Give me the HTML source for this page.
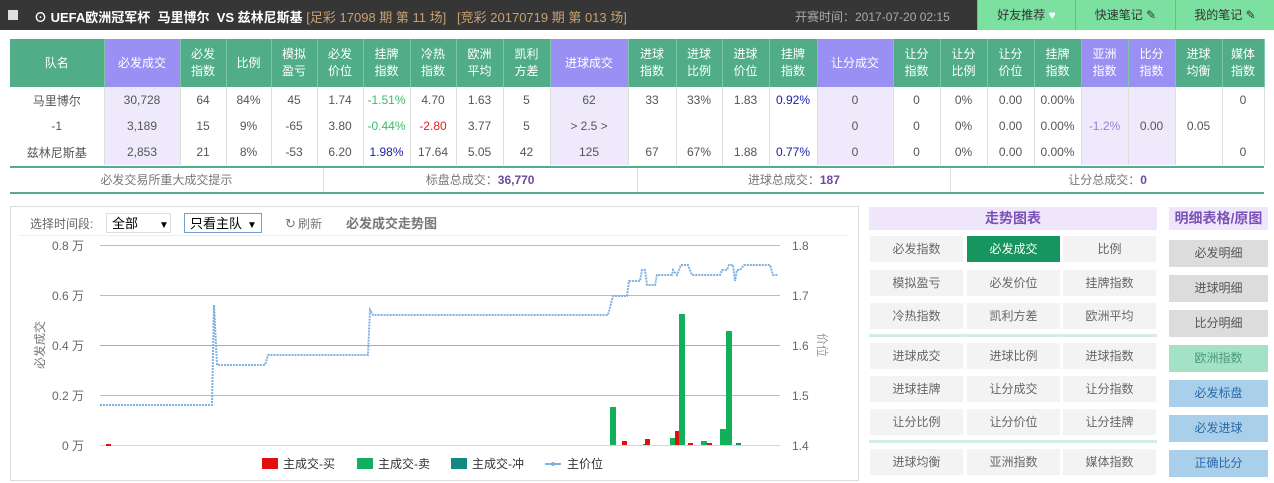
<!DOCTYPE html>
<html><head><meta charset="utf-8"><style>
*{margin:0;padding:0;box-sizing:border-box}
body{width:1274px;height:483px;background:#fff;font-family:"Liberation Sans","Noto Sans CJK SC",sans-serif;font-size:12px;color:#555;position:relative;overflow:hidden}
.top{position:absolute;left:0;top:0;width:1274px;height:30px;background:#363636}
.top .t{position:absolute;left:34px;top:7px;color:#fff;font-weight:bold;font-size:13px;white-space:nowrap}
.top .t span{color:#c8a070;font-weight:normal}
.top .cb{position:absolute;left:8px;top:10px;width:10px;height:10px;background:#ddd}
.top .time{position:absolute;left:795px;top:8px;color:#aaa;font-size:12px}
.btn{position:absolute;top:0;height:30px;background:#7be0a0;color:#333;text-align:center;line-height:30px;font-size:12px;border-left:1px solid #5cc484}
table{position:absolute;left:10px;top:39px;border-collapse:collapse;table-layout:fixed;width:1254px}
td{text-align:center;height:26px;font-size:12px;color:#555;border-right:1px solid #ddd;white-space:nowrap}
tr.h td{height:48px;background:#50ad88;color:#fff;line-height:17px;border-right:1px solid #7cc7a8}
tr.h td.p{background:#9a90f4}
td.lp{background:#eeeafc}
.g{color:#3bbb6a}.r{color:#e02020}.b{color:#1a1aa8}.v{color:#9a7ed8}
.sum{position:absolute;left:10px;top:166px;width:1254px;height:28px;border-top:2px solid #59a98a;border-bottom:2px solid #59a98a;display:flex}
.sum div{flex:1;text-align:center;line-height:24px;border-right:1px solid #ddd;color:#777}
.sum b{color:#6b4c9a}
.chart{position:absolute;left:10px;top:206px;width:849px;height:275px;border:1px solid #ddd}
.rp{position:absolute;font-size:12px;text-align:center}
.hd{background:#efe6fc;color:#7a52b5;font-weight:bold;font-size:14px;line-height:23px;height:23px}
.gb{position:absolute;width:93px;height:26px;background:#f3f3f3;color:#666;line-height:26px;text-align:center}
.gb.on{background:#17955e;color:#fff}
.sep{position:absolute;left:869px;width:288px;height:3px;background:#d4eee2}
.rb{position:absolute;left:1169px;width:99px;height:27px;line-height:27px;text-align:center;color:#555}
</style></head><body>
<div class="top"><div class="cb"></div><div class="t">⊙ UEFA欧洲冠军杯&nbsp;&nbsp;马里博尔&nbsp;&nbsp;VS 兹林尼斯基 <span>[足彩 17098 期 第 11 场]&nbsp;&nbsp;&nbsp;[竞彩 20170719 期 第 013 场]</span></div>
<div class="time">开赛时间：2017-07-20 02:15</div></div>
<div class="btn" style="left:977px;width:98px">好友推荐 <span style="color:#fff">♥</span></div>
<div class="btn" style="left:1075px;width:100px">快速笔记 ✎</div>
<div class="btn" style="left:1175px;width:99px">我的笔记 ✎</div>

<table>
<colgroup><col style="width:94px"><col style="width:76px"><col style="width:46px"><col style="width:45px"><col style="width:46px"><col style="width:46px"><col style="width:47px"><col style="width:46px"><col style="width:47px"><col style="width:47px"><col style="width:78px"><col style="width:48px"><col style="width:46px"><col style="width:47px"><col style="width:48px"><col style="width:76px"><col style="width:47px"><col style="width:47px"><col style="width:47px"><col style="width:47px"><col style="width:47px"><col style="width:47px"><col style="width:47px"><col style="width:42px"></colgroup>
<tr class="h"><td>队名</td><td class="p">必发成交</td><td>必发<br>指数</td><td>比例</td><td>模拟<br>盈亏</td><td>必发<br>价位</td><td>挂牌<br>指数</td><td>冷热<br>指数</td><td>欧洲<br>平均</td><td>凯利<br>方差</td><td class="p">进球成交</td><td>进球<br>指数</td><td>进球<br>比例</td><td>进球<br>价位</td><td>挂牌<br>指数</td><td class="p">让分成交</td><td>让分<br>指数</td><td>让分<br>比例</td><td>让分<br>价位</td><td>挂牌<br>指数</td><td class="p">亚洲<br>指数</td><td class="p">比分<br>指数</td><td>进球<br>均衡</td><td>媒体<br>指数</td></tr>
<tr><td>马里博尔</td><td class="lp">30,728</td><td>64</td><td>84%</td><td>45</td><td>1.74</td><td class="g">-1.51%</td><td>4.70</td><td>1.63</td><td>5</td><td class="lp">62</td><td>33</td><td>33%</td><td>1.83</td><td class="b">0.92%</td><td class="lp">0</td><td>0</td><td>0%</td><td>0.00</td><td>0.00%</td><td class="lp"></td><td class="lp"></td><td></td><td>0</td></tr>
<tr><td>-1</td><td class="lp">3,189</td><td>15</td><td>9%</td><td>-65</td><td>3.80</td><td class="g">-0.44%</td><td class="r">-2.80</td><td>3.77</td><td>5</td><td class="lp">&gt; 2.5 &gt;</td><td></td><td></td><td></td><td></td><td class="lp">0</td><td>0</td><td>0%</td><td>0.00</td><td>0.00%</td><td class="lp v">-1.2%</td><td class="lp">0.00</td><td>0.05</td><td></td></tr>
<tr><td>兹林尼斯基</td><td class="lp">2,853</td><td>21</td><td>8%</td><td>-53</td><td>6.20</td><td class="b">1.98%</td><td>17.64</td><td>5.05</td><td>42</td><td class="lp">125</td><td>67</td><td>67%</td><td>1.88</td><td class="b">0.77%</td><td class="lp">0</td><td>0</td><td>0%</td><td>0.00</td><td>0.00%</td><td class="lp"></td><td class="lp"></td><td></td><td>0</td></tr>
</table>
<div class="sum"><div>必发交易所重大成交提示</div><div>标盘总成交：<b>36,770</b></div><div>进球总成交：<b>187</b></div><div style="border:none">让分总成交：<b>0</b></div></div>

<div class="chart"></div>
<svg style="position:absolute;left:0;top:0" width="860" height="483" font-family="Liberation Sans,Noto Sans CJK SC,sans-serif">
<text x="30" y="228" font-size="12" fill="#666">选择时间段:</text>
<rect x="106.5" y="213.5" width="64" height="19" fill="#fff" stroke="#ddd"/>
<text x="112" y="228" font-size="13" fill="#000">全部</text><text x="159" y="228" font-size="10" fill="#000">▼</text>
<rect x="184.5" y="213.5" width="77" height="19" fill="#fff" stroke="#7a9ccc"/>
<text x="190" y="228" font-size="13" fill="#000">只看主队</text><text x="247" y="228" font-size="10" fill="#000">▼</text>
<text x="285" y="228" font-size="13" fill="#777">↻</text><text x="298" y="228" font-size="12" fill="#777">刷新</text>
<text x="346" y="228" font-size="13" fill="#777" font-weight="bold">必发成交走势图</text>
<line x1="20" y1="235.5" x2="848" y2="235.5" stroke="#eee"/>
<g stroke="#bbb"><line x1="100" y1="245.5" x2="780" y2="245.5"/><line x1="100" y1="295.5" x2="780" y2="295.5"/><line x1="100" y1="345.5" x2="780" y2="345.5" stroke="#aaa"/><line x1="100" y1="395.5" x2="780" y2="395.5"/><line x1="100" y1="445.5" x2="780" y2="445.5" stroke="#c8d8e8"/></g>
<g font-size="12" fill="#666" text-anchor="end"><text x="84" y="250">0.8 万</text><text x="84" y="300">0.6 万</text><text x="84" y="350">0.4 万</text><text x="84" y="400">0.2 万</text><text x="84" y="450">0 万</text></g>
<g font-size="12" fill="#666"><text x="792" y="250">1.8</text><text x="792" y="300">1.7</text><text x="792" y="350">1.6</text><text x="792" y="400">1.5</text><text x="792" y="450">1.4</text></g>
<text transform="translate(44,345) rotate(-90)" font-size="12" fill="#777" text-anchor="middle">必发成交</text>
<text transform="translate(818,345) rotate(90)" font-size="12" fill="#999" text-anchor="middle">价位</text>
<g>
<rect x="610" y="407" width="6" height="38" fill="#12b05a"/><rect x="622" y="441" width="5" height="4" fill="#e01010"/>
<rect x="643" y="444" width="3" height="1" fill="#12b05a"/><rect x="645" y="439" width="5" height="6" fill="#e01010"/>
<rect x="670" y="438" width="5" height="7" fill="#12b05a"/><rect x="675" y="431" width="4" height="14" fill="#e01010"/>
<rect x="679" y="314" width="6" height="131" fill="#12b05a"/><rect x="688" y="443" width="5" height="2" fill="#e01010"/>
<rect x="701" y="441" width="6" height="4" fill="#12b05a"/><rect x="707" y="443" width="5" height="2" fill="#e01010"/>
<rect x="720" y="429" width="6" height="16" fill="#12b05a"/><rect x="726" y="331" width="6" height="114" fill="#12b05a"/>
<rect x="736" y="443" width="5" height="2" fill="#128a80"/><rect x="106" y="444" width="5" height="2" fill="#e01010"/>
</g>
<polyline fill="none" stroke="#7fb0e4" stroke-width="2" stroke-dasharray="2 1" points="100,405 212,405 214,305 217,365 265,365 268,355 368,355 370,310 373,315 608,315 613,296 627,296 629,281 640,281 642,270 645,270 647,285 655,285 657,275 672,275 673,270 677,275 681,265 688,265 692,275 720,275 722,270 727,270 729,265 733,265 735,281 737,270 740,270 744,265 770,265 773,275 778,275"/>
<rect x="262" y="458" width="16" height="11" fill="#e01010"/><text x="283" y="468" font-size="12" fill="#333">主成交-买</text>
<rect x="357" y="458" width="16" height="11" fill="#12b05a"/><text x="378" y="468" font-size="12" fill="#333">主成交-卖</text>
<rect x="451" y="458" width="16" height="11" fill="#128a80"/><text x="472" y="468" font-size="12" fill="#333">主成交-冲</text>
<line x1="545" y1="464" x2="561" y2="464" stroke="#7fb0e4" stroke-width="2"/><circle cx="553" cy="464" r="2" fill="#7fb0e4"/><text x="567" y="468" font-size="12" fill="#333">主价位</text>
</svg>

<div class="rp hd" style="left:869px;top:207px;width:288px">走势图表</div>
<div class="rp hd" style="left:1169px;top:207px;width:99px">明细表格/原图</div>
<div class="gb" style="left:870px;top:236px">必发指数</div><div class="gb on" style="left:967px;top:236px">必发成交</div><div class="gb" style="left:1063px;top:236px">比例</div>
<div class="gb" style="left:870px;top:270px">模拟盈亏</div><div class="gb" style="left:967px;top:270px">必发价位</div><div class="gb" style="left:1063px;top:270px">挂牌指数</div>
<div class="gb" style="left:870px;top:303px">冷热指数</div><div class="gb" style="left:967px;top:303px">凯利方差</div><div class="gb" style="left:1063px;top:303px">欧洲平均</div>
<div class="sep" style="top:334px"></div>
<div class="gb" style="left:870px;top:343px">进球成交</div><div class="gb" style="left:967px;top:343px">进球比例</div><div class="gb" style="left:1063px;top:343px">进球指数</div>
<div class="gb" style="left:870px;top:376px">进球挂牌</div><div class="gb" style="left:967px;top:376px">让分成交</div><div class="gb" style="left:1063px;top:376px">让分指数</div>
<div class="gb" style="left:870px;top:409px">让分比例</div><div class="gb" style="left:967px;top:409px">让分价位</div><div class="gb" style="left:1063px;top:409px">让分挂牌</div>
<div class="sep" style="top:440px"></div>
<div class="gb" style="left:870px;top:449px">进球均衡</div><div class="gb" style="left:967px;top:449px">亚洲指数</div><div class="gb" style="left:1063px;top:449px">媒体指数</div>
<div class="rb" style="top:240px;background:#dcdcdc">必发明细</div>
<div class="rb" style="top:275px;background:#dcdcdc">进球明细</div>
<div class="rb" style="top:310px;background:#dcdcdc">比分明细</div>
<div class="rb" style="top:345px;background:#a3e2c6;color:#4a9a78">欧洲指数</div>
<div class="rb" style="top:380px;background:#a9cfeb;color:#2a6aa8">必发标盘</div>
<div class="rb" style="top:415px;background:#a9cfeb;color:#2a6aa8">必发进球</div>
<div class="rb" style="top:450px;background:#a9cfeb;color:#2a6aa8">正确比分</div>
</body></html>
